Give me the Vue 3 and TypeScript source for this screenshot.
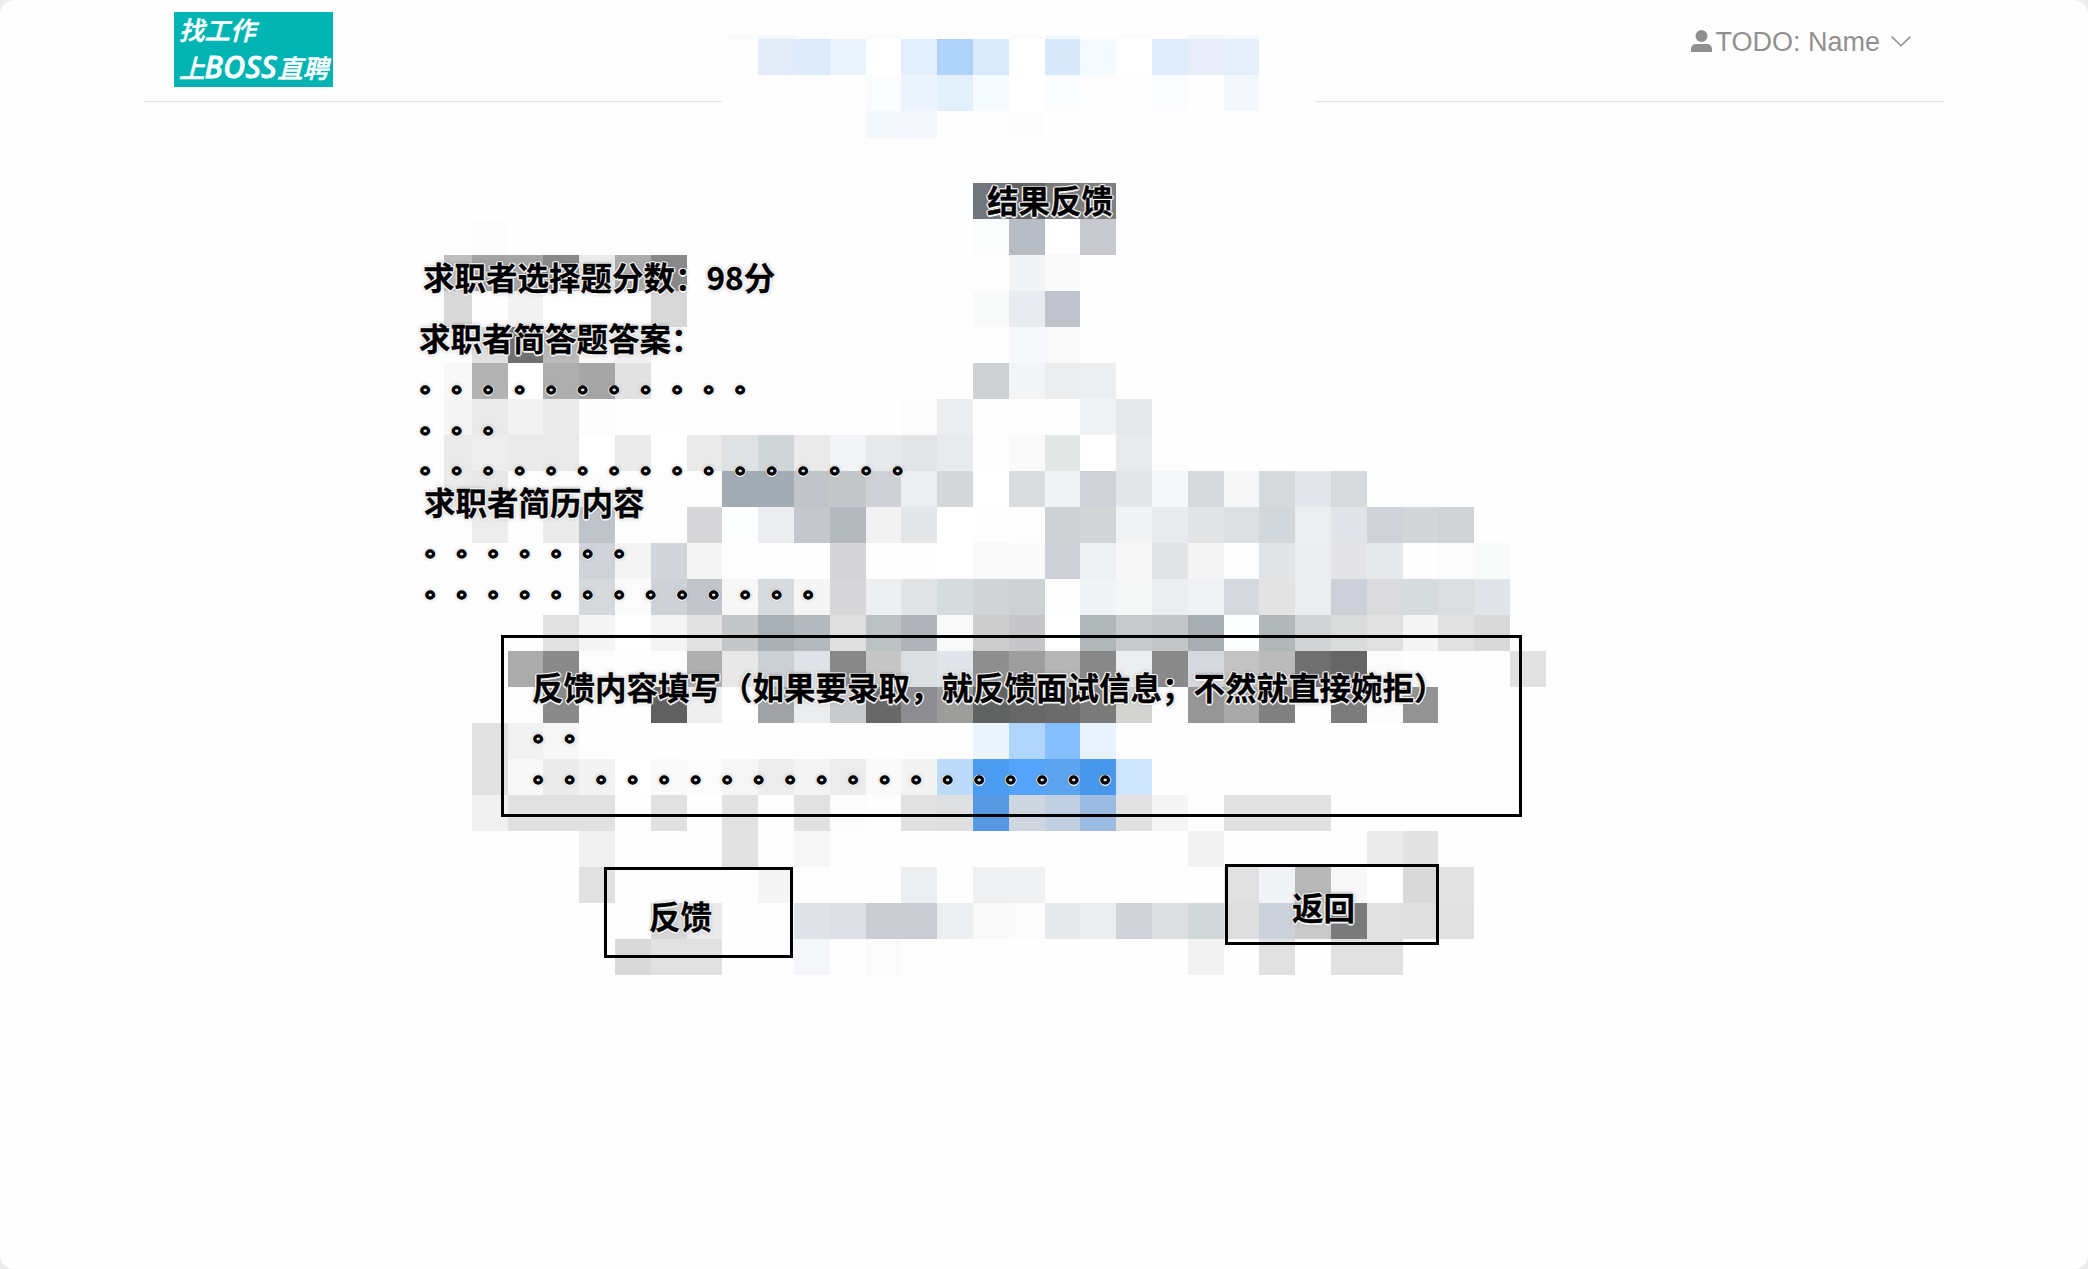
<script setup lang="ts">
interface Cell {
  x: number
  y: number
  w: number
  h: number
  fill: string
}

// Mosaic rows: top, bottom, then runs of colours keyed by their first column.
type Run = [number, string]
type Row = [number, number, Run[]]

const rows: Row[] = [
  [35, 39, [[7, 'fb f3f8fd fc fe fb fcfdfe fe fe fb f5f9fe fd fb fe f3f8fe f7fafe']]],
  [39, 75, [[8, 'e2ecf9 ddebfa eaf4fd ff e4effd b0d3fa daeafc ff d9e9fb f6fbff ff e0ecfc e7eef9 e4eff9']]],
  [75, 111, [[8, 'fe fe fe fbfcfe ecf5ff e2f0fc f6fbff ff fbfcfe fe fe fafcff fe f4f8fe']]],
  [111, 138, [[7, 'fd fe fd fe f2f8fc f4f8fe fe fe fc']]],
  [155, 183, [[13, 'fd fe fd fe fe fd']]],
  [183, 219, [[14, '71757c 606060 797979 7e7e7d']]],
  [219, 255, [[0, 'fc'], [14, 'fafcfb b8bcc5 ff c8cacf']]],
  [255, 291, [[-1, 'bf a3 a5 88 eb ab 89'], [15, 'f2f3f5 fa']]],
  [291, 327, [[-1, 'd9 fe f3 ff ff ff d8'], [14, 'f9fbfa eaebf0 c0c3cc']]],
  [327, 363, [[0, 'e0 70 ba f8 f0'], [15, 'f7f8fb f9']]],
  [363, 399, [[-1, 'f8 b3 ff ae a6 e2'], [14, 'ced2d4 f3f4f6 ebeced edeef0']]],
  [399, 435, [[-1, 'f5 ea f2 eb fc'], [12, 'fb ecedef fe fe fe f1f3f5 e7e8ec']]],
  [435, 471, [[-1, 'ea ee eb ea ff eb ff ea e0e1e2 d0d5d8 eaeaeb f3f4f7 e8e9eb e4e5e7 e9eaed fe fa e3e8e7 ff e9eaec fd']]],
  [471, 507, [[-1, 'eb e8 fd fc fc fe fe fd a3abb3 a3abb4 c1c4c9 c3c7ca cfd1d7 edeef1 d4d8db ff d9dde0 f2f3f5 cfd2d8 e3e7ea f5f7f9 d5d9dc f7 d6dadd e3e6ea d7dbde']]],
  [507, 543, [[-1, 'fd ec fd eb bfc3ca fe fe d7d7d9 fdfefe ecedf0 c4c7ce b3b9be f2f2f3 e5e6e8 ff fe fd d0d1d2 d4d5d7 f1f3f5 e9eaed e2e3e5 dce0e3 d2d7db edeef0 e1e5e9 cfd2d8 d2d6d9 cfd3d6']]],
  [543, 579, [[3, 'd0d4da f4 d2d6da f5 fe fe fe d5d5d8 fe fd ff f9 fa cdd1d7 eff0f4 f7 e3e4e5 f5 fd e1e5e8 ecedf0 e4e4e6 e7e8ea fe fc f9fbfa']]],
  [579, 615, [[3, 'd5d9dc fb ced2d6 c2c5cb f7 d7dbde f5 d7d7da eeeff1 e2e4e6 d5dcde d0d4d7 cdd1d4 fd f1f3f6 f5f7f6 ecedef f1f2f5 d5d9dd e3e3e4 ecedf0 cdd0d8 dbdbdd d6dbde dadee1 e1e5e9 fd']]],
  [615, 651, [[2, 'e1 f5 ff f4 e1 c5c6c8 a9afb3 b3b9bd df bcc1c4 b0b4b9 f9 cdcdce c6c6c8 ff b2b7ba c6cacd c2c6c9 a8aeb2 fcfefd b2b7ba d2d3d4 dadcdb e1 f5 e1 d9']]],
  [651, 687, [[1, 'ab 8a fd fe fd af e8 cbd0d4 dfe3e7 88 c6 dbdfe2 e1e5e9 8d8e8d 9e b6 878887 edeef0 888988 d5d9dd c3 bb 6f 65 fb fe'], [29, 'e1']]],
  [687, 723, [[1, 'fd 8a fe fe 60 ef ff a1a2a4 ebecee c9cacc 68 8d8d91 9d9e9c 616362 666766 6b 7a7b7a d3d3d1 fd 96 a9 80 fd 7c fc 93']]],
  [723, 759, [[0, 'e1 f2 f7'], [14, 'ecf5ff b0d5fd 85bffe e8f3fe']]],
  [759, 795, [[0, 'e1 f8 eb f3 ff fa fb f6 ed f4 ec fa f3 bcdbfa 4b9cf1 53a4fa 5ca4ef 4797ec cfe4fe']]],
  [795, 831, [[0, 'f1 e1 e1 e1 fe e1 fe e1 fe e1 fc fe e1 dfe0e1 5698e2 ced7e0 c0cfe1 9cbbe2 e1 f5 fe e1 e1 e1']]],
  [831, 867, [[3, 'f0'], [7, 'e1 fe f7'], [20, 'f3'], [25, 'eb e1']]],
  [867, 903, [[3, 'e1'], [8, 'f5'], [12, 'edeef0 fe eff0f2 f0f1f3'], [21, 'e1 f1f3f6 b8 f8 ff d9 e3']]],
  [903, 939, [[5, 'd8 ea'], [9, 'dfe3e7 dcdfe3 cacdd3 c9ccd3 edeef0 f9 fb e7e8ea ebecee cfd2d9 dadee1 d2d7da dcdddc cdd1d9 c9c9ca 7a e1 e0 e1']]],
  [939, 975, [[4, 'd9 e1 e1'], [9, 'f4f6f9 fe fb'], [20, 'f2 fe e1 fe e1 e1']]],
]

const edge = (column: number): number => (column < 0 ? 444 : Math.round(471.8 + 35.8 * column))

const cells: Cell[] = rows.flatMap(([top, bottom, runs]) =>
  runs.flatMap(([start, colours]) =>
    colours.split(' ').map((c, i) => ({
      x: edge(start + i),
      y: top,
      w: edge(start + i + 1) - edge(start + i),
      h: bottom - top,
      fill: '#' + (c.length === 2 ? c.repeat(3) : c),
    })),
  ),
)

const dots = (count: number): string => '。'.repeat(count)

const score = 98
const answers = [11, 3, 16]
const resume = [7, 13]
const feedback = [2, 19]
</script>

<template>
  <div class="page">
    <svg class="mosaic" width="2088" height="1269" shape-rendering="crispEdges" aria-hidden="true">
      <rect x="722" y="35" width="593" height="103" fill="#fefefe" />
      <rect v-for="(c, i) in cells" :key="i" :x="c.x" :y="c.y" :width="c.w" :height="c.h" :fill="c.fill" />
    </svg>

    <header class="header">
      <div class="logo">
        <span>找工作</span>
        <span>上<span class="latin">BOSS</span>直聘</span>
      </div>
      <div class="user">
        <svg class="person" width="21" height="22" viewBox="0 0 21 22">
          <circle cx="10.5" cy="6" r="6" />
          <path d="M0 22v-3.2a4.8 4.8 0 0 1 4.8-4.8h11.4a4.8 4.8 0 0 1 4.8 4.8V22z" />
        </svg>
        <span>TODO: Name</span>
        <svg class="arrow" width="20" height="11" viewBox="0 0 20 11">
          <path d="M.6.6 10 9.8 19.4.6" />
        </svg>
      </div>
    </header>

    <main class="content">
      <h1 class="title">结果反馈</h1>
      <section class="score">求职者选择题分数：{{ score }}分</section>
      <section class="answers">
        <p>求职者简答题答案：</p>
        <p v-for="(n, i) in answers" :key="i"><span class="dots">{{ dots(n) }}</span></p>
      </section>
      <section class="resume">
        <p>求职者简历内容</p>
        <p v-for="(n, i) in resume" :key="i"><span class="dots">{{ dots(n) }}</span></p>
      </section>
      <section class="feedback">
        <p>反馈内容填写（如果要录取，就反馈面试信息；不然就直接婉拒）</p>
        <p v-for="(n, i) in feedback" :key="i"><span class="dots">{{ dots(n) }}</span></p>
      </section>
      <div class="actions">
        <button class="submit" type="button">反馈</button>
        <button class="back" type="button">返回</button>
      </div>
    </main>
  </div>
</template>

<style>
body {
  margin: 0;
  background: #ececec;
}
</style>

<style scoped>
.page {
  position: relative;
  isolation: isolate;
  box-sizing: border-box;
  width: 2088px;
  height: 1269px;
  overflow: hidden;
  border-radius: 14px;
  background: #fefefe;
}

.mosaic {
  position: absolute;
  inset: 0;
  z-index: -1;
}

.header {
  display: flex;
  justify-content: space-between;
  box-sizing: border-box;
  width: 1800px;
  height: 102px;
  margin: 0 auto;
  padding: 12px 33px 0 30px;
  background: linear-gradient(#e4e4e4, #e4e4e4) 0 101px / 578px 1px no-repeat,
    linear-gradient(#e4e4e4, #e4e4e4) 100% 101px / 629px 1px no-repeat;
}

.logo {
  display: flex;
  flex-direction: column;
  gap: 4px;
  box-sizing: border-box;
  width: 159px;
  height: 75px;
  padding-left: 5px;
  background: #00b4b3;
  color: #fff;
  font: italic 500 25.5px/34px 'Noto Sans CJK SC', sans-serif;
  -webkit-text-stroke: 0.5px #fff;
  white-space: nowrap;
}

.latin {
  font: italic 500 30px/1 'Noto Sans', sans-serif;
  letter-spacing: 0.5px;
  -webkit-text-stroke: 0.9px #fff;
}

.user {
  display: flex;
  align-items: center;
  height: 59px;
  color: #909090;
  font: 27px/32px 'Liberation Sans', Arial, sans-serif;
}

.person {
  margin: 0 3px 2px 0;
  fill: currentColor;
}

.arrow {
  margin-left: 11px;
  fill: none;
  stroke: currentColor;
  stroke-width: 1.5;
}

.content {
  display: flex;
  flex-direction: column;
  align-items: flex-start;
  padding-top: 77px;
  color: #000;
  font: 700 31.5px/40.3px 'Noto Sans CJK SC', sans-serif;
  text-spacing-trim: space-all;
  white-space: nowrap;
  -webkit-text-stroke: 0.3px #000;
  text-shadow: 1.5px 0 #f4f4f4, -1.5px 0 #f4f4f4, 0 1.5px #f4f4f4, 0 -1.5px #f4f4f4, 1px 1px #f4f4f4,
    -1px -1px #f4f4f4, 1px -1px #f4f4f4, -1px 1px #f4f4f4, 0 0 4px #888;
}

p,
h1 {
  margin: 0;
  font: inherit;
}

.dots {
  margin-left: 0.9px;
  font-size: 26.5px;
  letter-spacing: 5px;
  line-height: 1;
  vertical-align: -1.4px;
  -webkit-text-stroke: 1.4px #000;
}

.title {
  margin-left: 987px;
}

.score {
  margin: 37px 0 0 423px;
}

.answers {
  margin: 20px 0 0 419px;
}

.resume {
  margin: 3px 0 0 424px;
}

.feedback {
  box-sizing: border-box;
  width: 1021px;
  height: 182px;
  margin: 33px 0 0 501px;
  padding: 28px 0 0 28px;
  border: 3px solid #000;
}

.actions {
  display: flex;
  align-items: flex-start;
  margin: 47px 0 0 604px;
}

button {
  box-sizing: border-box;
  border: 3px solid #000;
  background: none;
  color: inherit;
  font: inherit;
  text-align: left;
  text-shadow: inherit;
}

.submit {
  width: 189px;
  height: 91px;
  margin-top: 3px;
  padding: 5px 0 0 42px;
}

.back {
  width: 214px;
  height: 81px;
  margin-left: 432px;
  padding: 3px 0 0 64px;
}
</style>
